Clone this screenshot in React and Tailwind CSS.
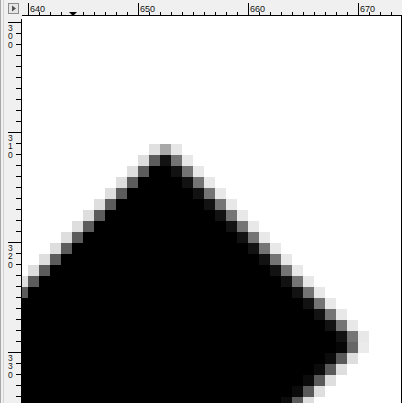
import React from "react";

// canvas zoom: 11 screen px per image px
const Z = 11;
const COL0 = 640; // column drawn at local x = 6
const ROW0 = 300; // row drawn at local y = 7

function buildPixels() {
  const cells = [];
  const runs = [];
  const put = (col, row, fill) => cells.push({ col, row, fill });

  put(651, 311, "#e0e0e0");
  put(652, 311, "#a8a8a8");
  put(653, 311, "#e6e6e6");

  for (let row = 312; row <= 335; row++) {
    const r = row - 310;
    const leftGray = 653 - r;
    put(leftGray - 1, row, "#dedede");
    put(leftGray, row, "#5c5c5c");
    let lastBlack;
    if (row <= 328) {
      const dark = 650 + r;
      put(dark, row, "#121212");
      put(dark + 1, row, "#747474");
      put(dark + 2, row, "#e8e8e8");
      lastBlack = dark - 1;
    } else {
      const nb = 668 - (row - 329);
      const corner = row === 329;
      put(nb, row, corner ? "#060606" : "#0b0b0b");
      put(nb + 1, row, corner ? "#666666" : "#5a5a5a");
      put(nb + 2, row, corner ? "#ebebeb" : "#dedede");
      lastBlack = nb - 1;
    }
    if (lastBlack >= leftGray + 1) runs.push({ row, from: leftGray + 1, to: lastBlack });
  }
  return { cells, runs };
}

const px = (col) => 6 + (col - COL0) * Z;
const py = (row) => 7 + (row - ROW0) * Z;

function PixelView() {
  const { cells, runs } = buildPixels();
  return (
    <svg width="379" height="387" shapeRendering="crispEdges" className="block">
      {runs.map((r) => (
        <rect key={"r" + r.row} x={px(r.from)} y={py(r.row)} width={(r.to - r.from + 1) * Z} height={Z} fill="#000" />
      ))}
      {cells.map((c, i) => (
        <rect key={i} x={px(c.col)} y={py(c.row)} width={Z} height={Z} fill={c.fill} />
      ))}
    </svg>
  );
}

function HRuler() {
  const ticks = [];
  for (let col = 639; col <= 673; col++) {
    const x = 6 + (col - COL0) * Z + 0.5;
    const major = col % 10 === 0;
    ticks.push(
      <line key={col} x1={x} x2={x} y1={major ? 3 : 12} y2={15} stroke="#000" strokeWidth="1" />
    );
    if (major) {
      ticks.push(
        <text key={"t" + col} x={x + 1.5} y={12} fontSize="9" fill="#111" fontFamily="'Liberation Sans', Arial, sans-serif">
          {col}
        </text>
      );
    }
  }
  return (
    <svg width="380" height="16" className="block">
      {ticks}
      <polygon points="47,12 55,12 51,16" fill="#000" />
      <line x1="0" x2="380" y1="15.5" y2="15.5" stroke="#000" />
    </svg>
  );
}

function VRuler() {
  const ticks = [];
  for (let row = 299; row <= 335; row++) {
    const y = 7 + (row - ROW0) * Z - 0.5;
    const major = row % 10 === 0;
    ticks.push(
      <line key={row} x1={major ? 8 : 16} x2={21} y1={y} y2={y} stroke="#000" strokeWidth="1" />
    );
    if (major) {
      // digits stacked one under another
      String(row)
        .split("")
        .forEach((d, k) =>
          ticks.push(
            <text key={"t" + row + k} x={8} y={y + 8.5 + k * 8.4} fontSize="8.5" fill="#111" fontFamily="'Liberation Sans', Arial, sans-serif">
              {d}
            </text>
          )
        );
    }
  }
  return (
    <svg width="22" height="387" className="block">
      <line x1="0.5" x2="0.5" y1="0" y2="387" stroke="#a8a8a8" />
      <line x1="3.5" x2="3.5" y1="0" y2="387" stroke="#d4d4d4" />
      {ticks}
      <line x1="21.5" x2="21.5" y1="3" y2="387" stroke="#000" />
    </svg>
  );
}

function Corner() {
  return (
    <svg width="22" height="16" className="block">
      <line x1="0.5" x2="0.5" y1="0" y2="16" stroke="#a8a8a8" />
      <line x1="3.5" x2="3.5" y1="0" y2="16" stroke="#d4d4d4" />
      <rect x="8.5" y="3.5" width="10" height="10" fill="#e6e6e6" stroke="#8c8c8c" />
      <polygon points="12,5.5 12,11.5 16,8.5" fill="#505050" />
    </svg>
  );
}

export default function App() {
  return (
    <div className="w-[402px] h-[403px] flex flex-col bg-[#f0f0f0] overflow-hidden">
      <div className="flex h-4 shrink-0">
        <Corner />
        <HRuler />
      </div>
      <div className="flex flex-1 min-h-0">
        <VRuler />
        <div className="flex-1 bg-white border-r border-black overflow-hidden">
          <PixelView />
        </div>
      </div>
    </div>
  );
}
